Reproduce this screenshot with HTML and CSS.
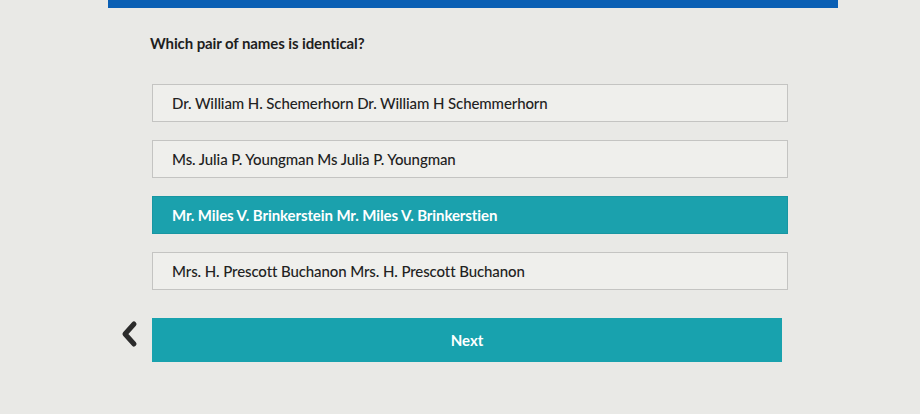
FILE: index.html
```html
<!DOCTYPE html>
<html>
<head>
<meta charset="utf-8">
<link rel="stylesheet" href="styles.css">
</head>
<body>
<div class="topbar"></div>
<main class="quiz">
  <h1 class="question">Which pair of names is identical?</h1>
  <div class="options">
    <div class="option">Dr. William H. Schemerhorn Dr. William H Schemmerhorn</div>
    <div class="option">Ms. Julia P. Youngman Ms Julia P. Youngman</div>
    <div class="option selected">Mr. Miles V. Brinkerstein Mr. Miles V. Brinkerstien</div>
    <div class="option">Mrs. H. Prescott Buchanon Mrs. H. Prescott Buchanon</div>
  </div>
  <div class="nav">
    <button class="back" aria-label="Back">
      <svg width="20" height="28" viewBox="0 0 20 28"><path d="M15 4 L6 14 L15 24" fill="none" stroke="#2b2b2b" stroke-width="5" stroke-linecap="round" stroke-linejoin="round"/></svg>
    </button>
    <button class="next">Next</button>
  </div>
</main>
</body>
</html>
```
FILE: styles.css
```css
html, body {
  margin: 0;
  padding: 0;
}
body {
  width: 920px;
  height: 414px;
  background: #e9e9e6;
  font-family: Lato, "Open Sans", sans-serif;
  color: #222;
  overflow: hidden;
}
.topbar {
  margin-left: 108px;
  width: 730px;
  height: 8px;
  background: #0a5fb4;
}
.quiz {
  display: flex;
  flex-direction: column;
  padding-left: 118px;
  width: 670px;
}
.question {
  margin: 26px 0 0 32px;
  font-size: 15px;
  font-weight: 700;
  line-height: 18px;
  color: #1e1e1e;
  letter-spacing: -0.1px;
}
.options {
  display: flex;
  flex-direction: column;
  gap: 18px;
  margin: 32px 0 0 34px;
  width: 636px;
}
.option {
  height: 38px;
  box-sizing: border-box;
  border: 1px solid #c4c4c2;
  background: #efefec;
  padding-left: 19px;
  display: flex;
  align-items: center;
  font-size: 15px;
  font-weight: 500;
  color: #222;
  letter-spacing: -0.1px;
}
.option.selected {
  background: #1ba1ad;
  border-color: #1896a2;
  color: #fff;
  font-weight: 700;
}
.nav {
  display: flex;
  align-items: flex-start;
  margin-top: 28px;
  gap: 12px;
}
.back {
  background: none;
  border: none;
  padding: 0;
  width: 22px;
  height: 30px;
  display: flex;
  align-items: center;
  justify-content: center;
  margin-top: 1px;
}
.next {
  width: 630px;
  height: 44px;
  border: none;
  background: #18a2ae;
  color: #fff;
  font-family: Lato, "Open Sans", sans-serif;
  font-size: 15px;
  font-weight: 700;
}
```
